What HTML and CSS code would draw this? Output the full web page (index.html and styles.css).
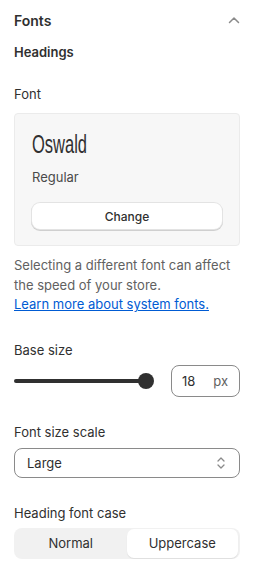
FILE: index.html
```html
<!DOCTYPE html>
<html lang="en">
<head>
    <meta charset="UTF-8">
    <meta name="viewport" content="width=device-width, initial-scale=1.0">
    <title>Fonts</title>
    <link rel="stylesheet" href="styles.css">
</head>
<body>
    <div class="panel">
        <div class="panel-head">
            <h2>Fonts</h2>
            <svg class="chevron" width="12" height="8" viewBox="0 0 12 8">
                <path d="M1.5 6.5 L6 2 L10.5 6.5" fill="none" stroke="#8a8a8a" stroke-width="1.5" stroke-linecap="round" stroke-linejoin="round"/>
            </svg>
        </div>

        <h3>Headings</h3>

        <div class="field field-font">
            <label>Font</label>
            <div class="font-card">
                <div class="font-name">Oswald</div>
                <div class="font-style">Regular</div>
                <button class="btn">Change</button>
            </div>
        </div>

        <p class="help">
            Selecting a different font can affect the speed of your store.
            <a href="#">Learn more about system fonts.</a>
        </p>

        <div class="field">
            <label>Base size</label>
            <div class="range-row">
                <div class="range">
                    <div class="track"></div>
                    <div class="thumb"></div>
                </div>
                <div class="num-box">
                    <span>18</span>
                    <span class="unit">px</span>
                </div>
            </div>
        </div>

        <div class="field">
            <label>Font size scale</label>
            <div class="select">
                <span>Large</span>
                <svg width="10" height="14" viewBox="0 0 10 14">
                    <path d="M2 5 L5 2 L8 5 M2 9 L5 12 L8 9" fill="none" stroke="#8a8a8a" stroke-width="1.3" stroke-linecap="round" stroke-linejoin="round"/>
                </svg>
            </div>
        </div>

        <div class="field">
            <label>Heading font case</label>
            <div class="segmented">
                <div class="seg">Normal</div>
                <div class="seg active">Uppercase</div>
            </div>
        </div>
    </div>
</body>
</html>
```

FILE: styles.css
```css
* {
    margin: 0;
    padding: 0;
    box-sizing: border-box;
    font-family: Inter, "Noto Sans", sans-serif;
}

body {
    background: #ffffff;
    color: #303030;
    font-size: 13px;
}

.panel {
    padding: 11px 15px 0 14px;
}

.panel-head {
    display: flex;
    justify-content: space-between;
    align-items: center;
    height: 18px;
}

h2 {
    font-size: 14px;
    font-weight: 600;
    color: #303030;
}

h3 {
    margin-top: 13px;
    font-size: 13px;
    font-weight: 600;
    color: #303030;
    line-height: 20px;
}

.field {
    margin-top: 25px;
}

.field-font {
    margin-top: 22px;
}

label {
    display: block;
    line-height: 20px;
    color: #303030;
}

.font-card {
    margin-top: 9px;
    padding: 13px 17px 16px 17px;
    background: #f7f7f7;
    border: 1px solid #ebebeb;
    border-radius: 4px;
}

.font-name {
    font-family: "Liberation Sans", Arial, sans-serif;
    font-size: 25px;
    line-height: 34px;
    color: #303030;
    transform: scaleX(0.66);
    transform-origin: left;
}

.font-style {
    margin-top: 6px;
    line-height: 20px;
    color: #4a4a4a;
}

.btn {
    display: block;
    width: 100%;
    height: 26px;
    margin-top: 16px;
    border: none;
    background: #ffffff;
    border-radius: 8px;
    box-shadow: 0 0 0 1px #e3e3e3, 0 1px 0 1px #cfcfcf;
    font-size: 12px;
    font-weight: 500;
    color: #303030;
    cursor: pointer;
}

.help {
    margin-top: 10px;
    line-height: 19.5px;
    color: #616161;
}

.help a {
    display: block;
    color: #005bd3;
    text-decoration: underline;
}

.range-row {
    display: flex;
    align-items: center;
    gap: 17px;
    margin-top: 5px;
}

.range {
    position: relative;
    width: 140px;
    height: 32px;
    display: flex;
    align-items: center;
}

.track {
    width: 132px;
    height: 4px;
    background: #303030;
    border-radius: 2px;
}

.thumb {
    position: absolute;
    left: 124px;
    top: 8px;
    width: 16px;
    height: 16px;
    border-radius: 50%;
    background: #303030;
}

.num-box {
    display: flex;
    justify-content: space-between;
    align-items: center;
    width: 69px;
    height: 32px;
    padding: 0 11px 0 10px;
    border: 1px solid #8a8a8a;
    border-radius: 8px;
    color: #303030;
}

.unit {
    color: #616161;
}

.select {
    display: flex;
    justify-content: space-between;
    align-items: center;
    height: 30px;
    margin-top: 6px;
    padding: 0 13px 0 12px;
    border: 1px solid #8a8a8a;
    border-radius: 8px;
    color: #303030;
}

.segmented {
    display: flex;
    height: 31px;
    margin-top: 5px;
    padding: 1px 2px 1px 1px;
    background: #f1f1f1;
    border-radius: 8px;
}

.seg {
    flex: 1;
    display: flex;
    justify-content: center;
    align-items: center;
    color: #303030;
}

.seg.active {
    background: #ffffff;
    border-radius: 7px;
    box-shadow: 0 1px 1px rgba(0, 0, 0, 0.08);
}
```
